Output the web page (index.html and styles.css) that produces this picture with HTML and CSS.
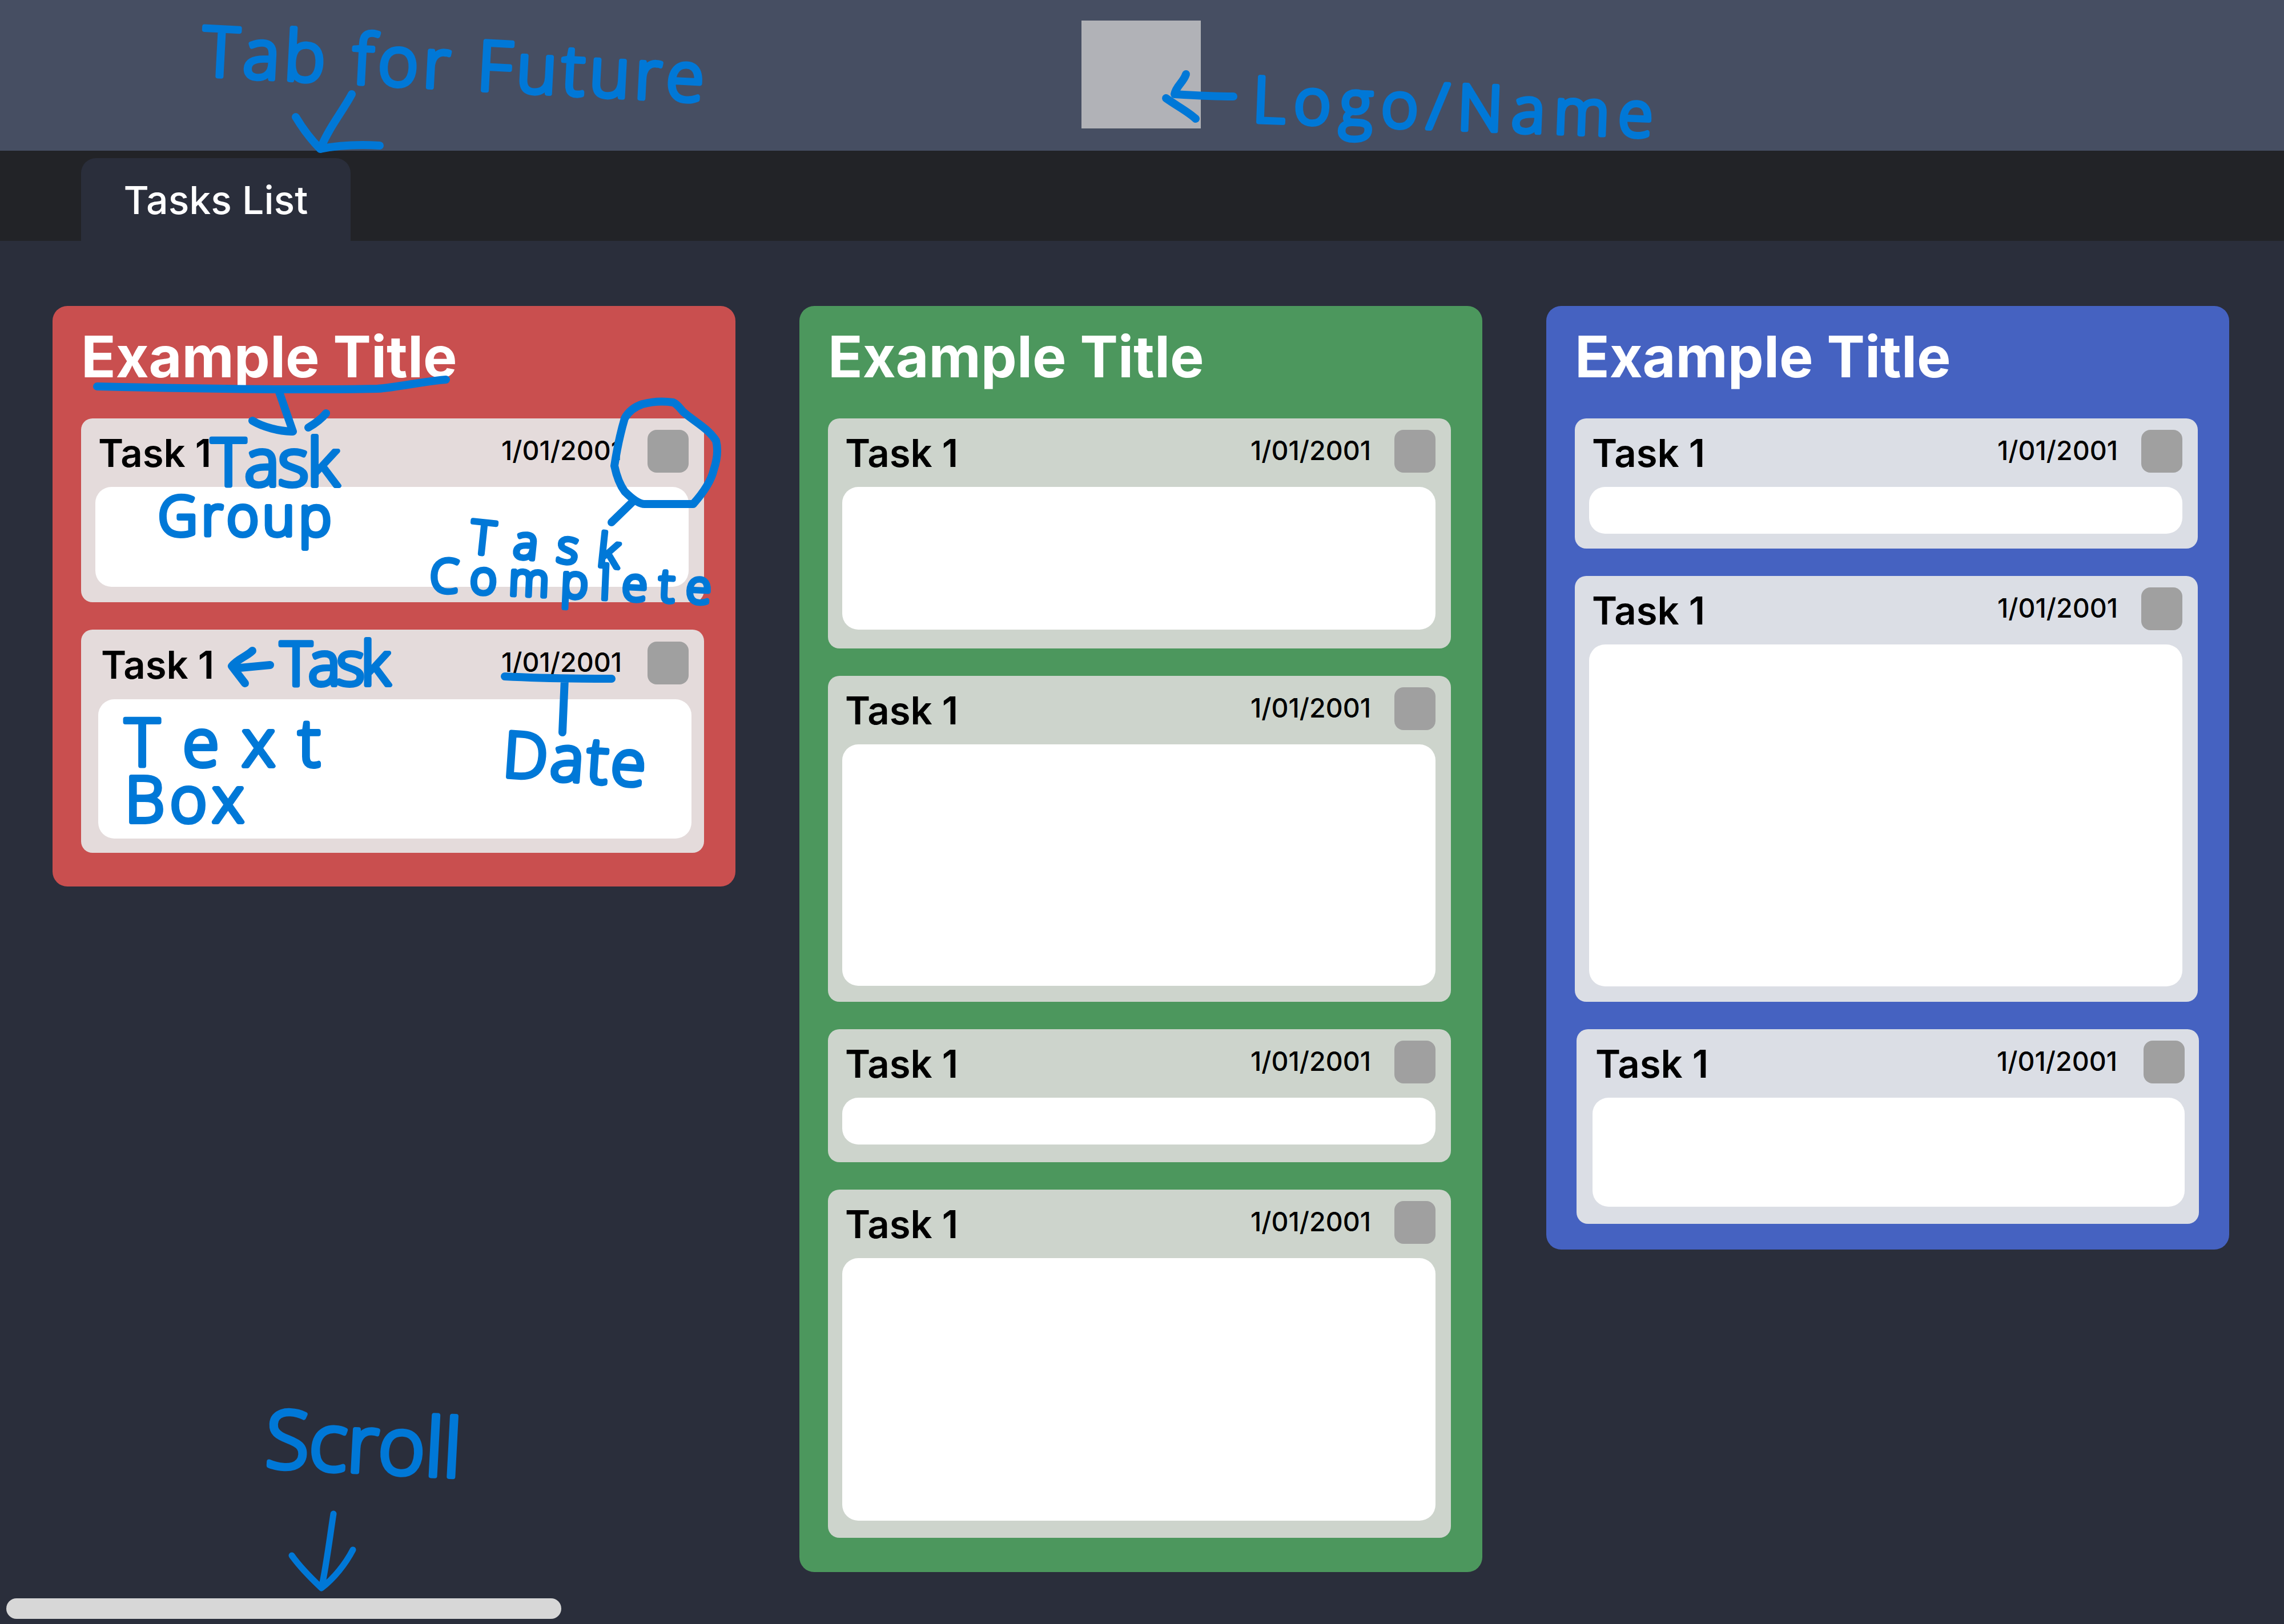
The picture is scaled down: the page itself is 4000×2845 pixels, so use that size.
FILE: index.html
```html
<!DOCTYPE html>
<html lang="en">
<head>
  <meta charset="UTF-8">
  <meta name="viewport" content="width=device-width, initial-scale=1.0">
  <title>Tasks List</title>
  <link rel="stylesheet" href="styles.css">
</head>
<body>
  <div class="page">
    <header class="header">
      <div class="logo"></div>
    </header>

    <nav class="tabs">
      <div class="tab">Tasks List</div>
    </nav>

    <main class="main">
      <div class="boards">
        <section class="group group-red">
          <h2 class="group-title">Example Title</h2>
          <div class="task task-r1">
            <div class="task-head">
              <span class="task-name">Task 1</span>
              <span class="task-date">1/01/2001</span>
              <button class="task-check"></button>
            </div>
            <div class="task-note"></div>
          </div>
          <div class="task task-r2">
            <div class="task-head">
              <span class="task-name">Task 1</span>
              <span class="task-date">1/01/2001</span>
              <button class="task-check"></button>
            </div>
            <div class="task-note"></div>
          </div>
        </section>

        <section class="group group-green">
          <h2 class="group-title">Example Title</h2>
          <div class="task task-g1">
            <div class="task-head">
              <span class="task-name">Task 1</span>
              <span class="task-date">1/01/2001</span>
              <button class="task-check"></button>
            </div>
            <div class="task-note"></div>
          </div>
          <div class="task task-g2">
            <div class="task-head">
              <span class="task-name">Task 1</span>
              <span class="task-date">1/01/2001</span>
              <button class="task-check"></button>
            </div>
            <div class="task-note"></div>
          </div>
          <div class="task task-g3">
            <div class="task-head">
              <span class="task-name">Task 1</span>
              <span class="task-date">1/01/2001</span>
              <button class="task-check"></button>
            </div>
            <div class="task-note"></div>
          </div>
          <div class="task task-g4">
            <div class="task-head">
              <span class="task-name">Task 1</span>
              <span class="task-date">1/01/2001</span>
              <button class="task-check"></button>
            </div>
            <div class="task-note"></div>
          </div>
        </section>

        <section class="group group-blue">
          <h2 class="group-title">Example Title</h2>
          <div class="task task-b1">
            <div class="task-head">
              <span class="task-name">Task 1</span>
              <span class="task-date">1/01/2001</span>
              <button class="task-check"></button>
            </div>
            <div class="task-note"></div>
          </div>
          <div class="task task-b2">
            <div class="task-head">
              <span class="task-name">Task 1</span>
              <span class="task-date">1/01/2001</span>
              <button class="task-check"></button>
            </div>
            <div class="task-note"></div>
          </div>
          <div class="task task-b3">
            <div class="task-head">
              <span class="task-name">Task 1</span>
              <span class="task-date">1/01/2001</span>
              <button class="task-check"></button>
            </div>
            <div class="task-note"></div>
          </div>
        </section>
      </div>

      <div class="scroll-thumb"></div>
    </main>
  </div>

  <!-- pen notes drawn over the mockup -->
  <svg class="notes" viewBox="0 0 4000 2845">
    <path class="pen" d="M616 165 C600 195 575 225 561 261 M518 205 C530 225 545 245 561 261 C590 255 630 253 665 255"/>
    <path class="pen" d="M2160 169 C2125 169 2090 167 2057 165 C2060 150 2072 145 2077 130 M2042 172 C2060 185 2080 195 2094 208"/>
    <path class="pen" d="M170 677 C300 680 520 684 661 681 C700 678 740 668 781 665 M489 687 L513 756 C490 756 460 748 442 737 M571 724 C562 735 552 742 540 749"/>
    <path class="pen" d="M1179 705 C1160 702 1140 704 1125 708 C1110 713 1100 722 1094 733 C1086 760 1080 790 1076 816 C1080 835 1086 850 1094 861 C1105 872 1118 883 1129 883 L1214 883 C1230 865 1245 845 1250 823 C1256 805 1258 788 1254 772 C1240 750 1215 738 1196 721 C1190 714 1186 708 1179 705 Z M1107 880 L1071 915"/>
    <path class="pen" d="M473 1165 L420 1170 M442 1140 C432 1150 415 1155 406 1167 L429 1197"/>
    <path class="pen" d="M884 1185 C940 1188 1010 1189 1071 1189 M989 1189 L985 1283"/>
    <path class="pen pen-thin" d="M584 2652 C578 2690 572 2740 563 2782 M511 2725 C525 2745 545 2765 563 2782 C585 2765 605 2740 618 2715"/>

    <text class="hand hand-120" transform="translate(353 132) rotate(3)" textLength="879">Tab for Future</text>
    <text class="hand hand-110" transform="translate(2193 213) rotate(2.2)" textLength="701">Logo/Name</text>
    <text class="hand hand-115" transform="translate(370 851)" textLength="224">Task</text>
    <text class="hand hand-95" transform="translate(277 938)" textLength="303">Group</text>
    <text class="hand hand-80" transform="translate(822 968) rotate(6)" textLength="262">Task</text>
    <text class="hand hand-80" transform="translate(752 1036) rotate(2.5)" textLength="493">Complete</text>
    <text class="hand hand-105" transform="translate(491 1200)" textLength="192">Task</text>
    <text class="hand hand-110" transform="translate(879 1360) rotate(4)" textLength="250">Date</text>
    <text class="hand hand-115" transform="translate(219 1342)" textLength="342">Text</text>
    <text class="hand hand-110" transform="translate(219 1440)" textLength="208">Box</text>
    <text class="hand hand-140" transform="translate(463 2570) rotate(3)" textLength="343">Scroll</text>
  </svg>
</body>
</html>
```

FILE: styles.css
```css
html, body {
  margin: 0;
  padding: 0;
}
body {
  font-family: Inter, "Liberation Sans", sans-serif;
  background-color: #2a2e3b;
  position: relative;
  overflow: hidden;
}
.page {
  display: flex;
  flex-direction: column;
  height: 2845px;
}

/* header */
.header {
  height: 264px;
  box-sizing: border-box;
  padding-top: 36px;
  padding-right: 3px;
  display: flex;
  justify-content: center;
  background-color: #464e62;
}
.logo {
  width: 209px;
  height: 189px;
  background-color: #b1b2b7;
}

/* tabs */
.tabs {
  height: 158px;
  box-sizing: border-box;
  padding-left: 142px;
  display: flex;
  align-items: flex-end;
  background-color: #222327;
}
.tab {
  width: 472px;
  height: 145px;
  display: flex;
  align-items: center;
  justify-content: center;
  background-color: #2a2e3b;
  border-radius: 26px 26px 0 0;
  color: white;
  font-size: 68px;
  font-weight: 500;
}

/* board */
.main {
  flex: 1;
  display: flex;
  flex-direction: column;
}
.boards {
  display: flex;
  align-items: flex-start;
  gap: 112px;
  padding: 114px 0 0 92px;
}
.group {
  width: 1196px;
  box-sizing: border-box;
  padding: 0 55px 60px 50px;
  border-radius: 26px;
}
.group-red {
  background-color: #c94f4f;
  padding-bottom: 59px;
}
.group-green {
  background-color: #4c975d;
}
.group-blue {
  background-color: #4562c1;
  padding-bottom: 45px;
}
.group-title {
  margin: 0;
  height: 197px;
  box-sizing: border-box;
  padding: 31px 0 0 0;
  color: white;
  font-size: 100px;
  line-height: 116px;
  font-weight: 700;
}

/* task */
.task {
  margin-bottom: 48px;
  padding: 0 27px 30px 25px;
  border-radius: 20px;
}
.task:last-child {
  margin-bottom: 0;
}
.group-red .task {
  background-color: #e4dbdb;
}
.group-green .task {
  background-color: #cdd4cc;
}
.group-blue .task {
  background-color: #dbdee5;
}
.task-head {
  height: 120px;
  display: flex;
  align-items: center;
  padding-left: 5px;
}
.task-name {
  flex: 1;
  font-size: 67px;
  font-weight: 600;
  color: black;
}
.task-date {
  margin: 0 41px 8px 0;
  font-size: 46.5px;
  font-weight: 500;
  color: black;
}
.task-check {
  width: 72px;
  height: 75px;
  margin-bottom: 5px;
  padding: 0;
  border: none;
  border-radius: 16px;
  background-color: #a0a0a0;
}
.task-note {
  background-color: white;
  border-radius: 28px;
}

/* note heights, they differ per task */
.task-r1 { padding-bottom: 27px; }
.task-r1 .task-note { height: 175px; }
.task-r1 .task-date { margin-right: 45px; }
.task-r2 { padding: 0 22px 25px 30px; }
.task-r2 .task-head { height: 122px; }
.task-r2 .task-note { height: 244px; }
.task-r2 .task-date { margin-right: 45px; }
.task-r2 .task-check { margin-right: 5px; }
.task-g1 { padding-bottom: 33px; }
.task-g1 .task-note { height: 250px; }
.task-g2 { padding-bottom: 28px; }
.task-g2 .task-note { height: 423px; }
.task-g3 { padding-bottom: 31px; }
.task-g3 .task-note { height: 82px; }
.task-g4 .task-note { height: 460px; }
.task-b1 { padding-bottom: 26px; }
.task-b1 .task-note { height: 82px; }
.task-b2 { padding-bottom: 27px; }
.task-b2 .task-note { height: 599px; }
.task-b3 { margin-left: 3px; margin-right: -2px; padding: 0 25px 30px 28px; }
.task-b3 .task-note { height: 191px; }
.task-b3 .task-date { margin-right: 46px; }

/* scrollbar */
.scroll-thumb {
  width: 972px;
  height: 36px;
  margin: auto 0 9px 11px;
  border-radius: 18px;
  background-color: #d7d7d7;
}

/* pen notes */
.notes {
  position: absolute;
  top: 0;
  left: 0;
  width: 4000px;
  height: 2845px;
  pointer-events: none;
}
.pen {
  fill: none;
  stroke: #0078d7;
  stroke-width: 14px;
  stroke-linecap: round;
  stroke-linejoin: round;
}
.pen-thin {
  stroke-width: 11px;
}
.hand {
  font-family: "Open Sans", sans-serif;
  font-weight: 300;
  fill: #0078d7;
  stroke: #0078d7;
  stroke-width: 8px;
  stroke-linejoin: round;
}
.hand-80 { font-size: 80px; }
.hand-95 { font-size: 95px; }
.hand-105 { font-size: 105px; }
.hand-110 { font-size: 110px; }
.hand-115 { font-size: 115px; }
.hand-120 { font-size: 120px; }
.hand-140 { font-size: 140px; }
```
